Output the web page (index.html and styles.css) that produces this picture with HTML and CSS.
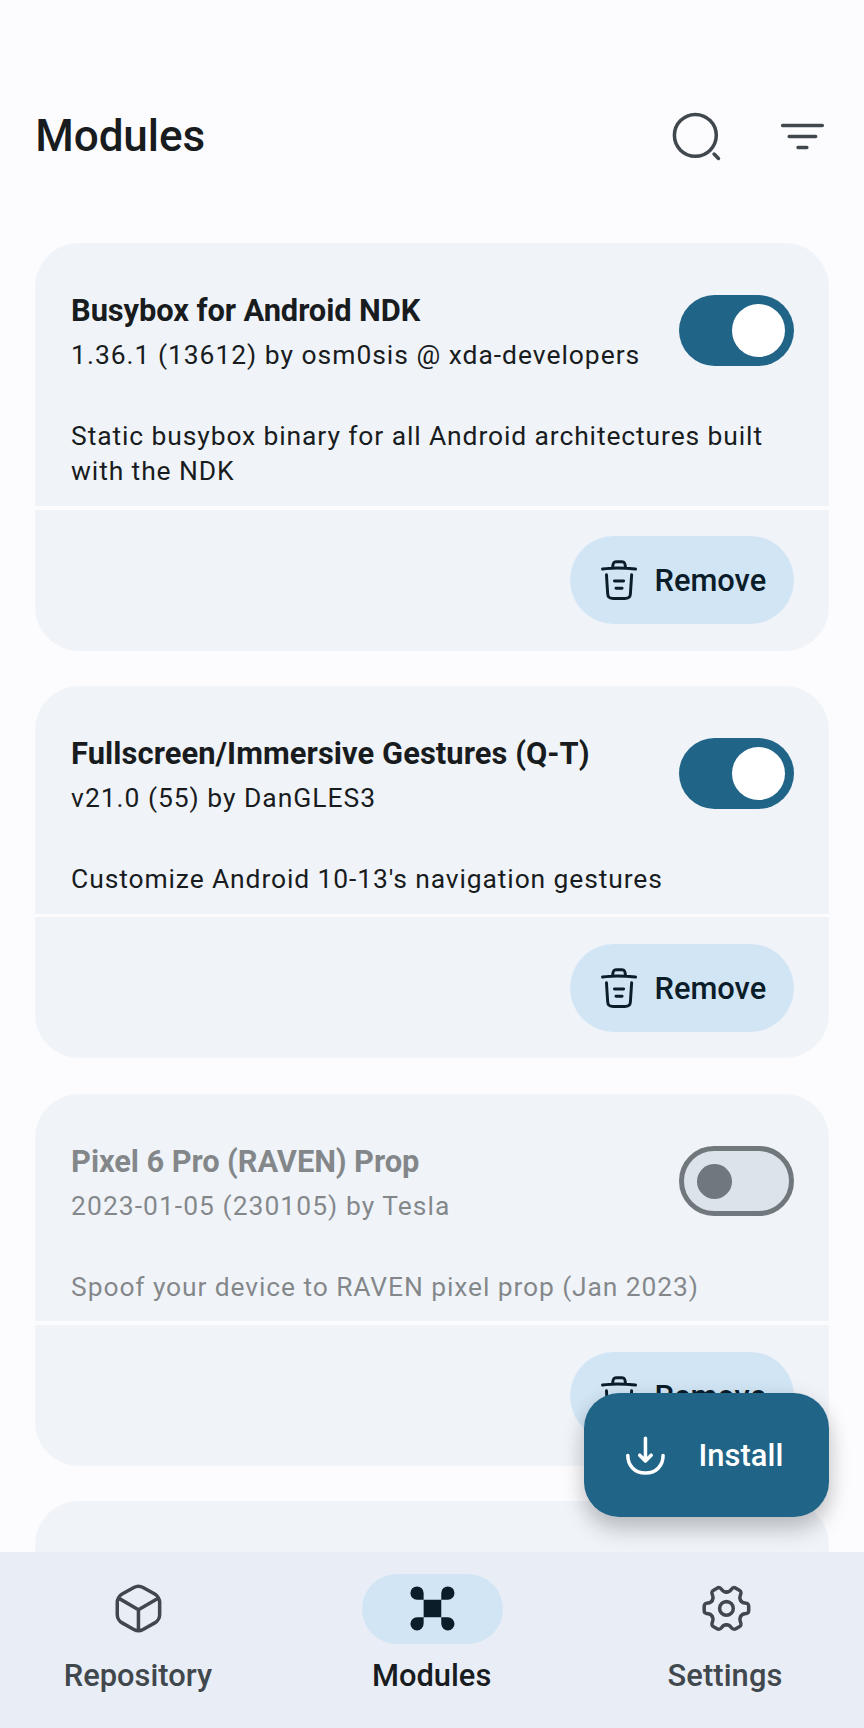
FILE: index.html
```html
<!DOCTYPE html>
<html lang="en">
<head>
<meta charset="utf-8">
<title>Modules</title>
<link rel="stylesheet" href="styles.css">
</head>
<body>
<svg class="sprite" aria-hidden="true">
  <symbol id="trash" viewBox="0 0 24 24"><path d="M21 5.98c-3.33-.33-6.68-.5-10.02-.5-1.98 0-3.96.1-5.94.3L3 5.98M8.5 4.97l.22-1.31C8.88 2.71 9 2 10.69 2h2.62c1.69 0 1.82.75 1.97 1.67l.22 1.3M18.85 9.14l-.65 10.07C18.09 20.78 18 22 15.21 22H8.79C6 22 5.91 20.78 5.8 19.21L5.15 9.14M10.33 16.5h3.33M9.5 12.5h5"/></symbol>
  <path id="tooth" d="M18.41 8.3C18.95 9.25 19.4 9.45 20.4 9.55C21.7 9.7 22.1 10 22.1 11.1V12.9C22.1 14 21.7 14.3 20.4 14.45C19.4 14.55 18.95 14.75 18.41 15.7"/>
</svg>
<div class="screen">
  <header class="topbar">
    <h1 class="topbar-title">Modules</h1>
    <svg class="icon" viewBox="0 0 24 24"><circle cx="11.5" cy="11.5" r="9.5"/><path d="M22 22l-2-2"/></svg>
    <svg class="icon" viewBox="0 0 24 24"><path d="M3 7h18M6 12h12M10 17h4"/></svg>
  </header>
  <main class="list">
    <section class="card">
      <div class="card-body">
        <div class="card-head">
          <div class="card-titles">
            <h2 class="name tight">Busybox for Android NDK</h2>
            <p class="meta">1.36.1 (13612) by osm0sis @ xda-developers</p>
          </div>
          <span class="switch on"><span class="thumb"></span></span>
        </div>
        <p class="desc">Static busybox binary for all Android architectures built with the NDK</p>
      </div>
      <div class="card-actions"><button class="remove"><svg class="icon small" viewBox="0 0 24 24"><use href="#trash"/></svg><span>Remove</span></button></div>
    </section>
    <section class="card">
      <div class="card-body">
        <div class="card-head">
          <div class="card-titles">
            <h2 class="name loose">Fullscreen/Immersive Gestures (Q-T)</h2>
            <p class="meta">v21.0 (55) by DanGLES3</p>
          </div>
          <span class="switch on"><span class="thumb"></span></span>
        </div>
        <p class="desc">Customize Android 10-13's navigation gestures</p>
      </div>
      <div class="card-actions"><button class="remove"><svg class="icon small" viewBox="0 0 24 24"><use href="#trash"/></svg><span>Remove</span></button></div>
    </section>
    <section class="card disabled">
      <div class="card-body">
        <div class="card-head">
          <div class="card-titles">
            <h2 class="name tight">Pixel 6 Pro (RAVEN) Prop</h2>
            <p class="meta">2023-01-05 (230105) by Tesla</p>
          </div>
          <span class="switch"><span class="thumb"></span></span>
        </div>
        <p class="desc">Spoof your device to RAVEN pixel prop (Jan 2023)</p>
      </div>
      <div class="card-actions"><button class="remove"><svg class="icon small" viewBox="0 0 24 24"><use href="#trash"/></svg><span>Remove</span></button></div>
    </section>
    <section class="card next"></section>
  </main>
  <button class="fab"><svg class="icon" viewBox="0 0 24 24"><path d="M4 12c0 4.42 3 8 8 8s8-3.58 8-8M12 4.2v10.2M9.4 11.9l2.6 2.6 2.6-2.6"/></svg><span>Install</span></button>
  <nav class="nav">
    <a class="nav-item">
      <span class="indicator"><svg class="icon" viewBox="0 0 24 24"><path d="M3.17 7.44L12 12.55l8.77-5.08M12 21.61v-9.07M9.93 2.48L4.59 5.45c-1.21.67-2.2 2.35-2.2 3.73v5.65c0 1.38.99 3.06 2.2 3.73l5.34 2.97c1.14.63 3.01.63 4.15 0l5.34-2.97c1.21-.67 2.2-2.35 2.2-3.73V9.18c0-1.38-.99-3.06-2.2-3.73l-5.34-2.97c-1.15-.64-3.01-.64-4.15 0z"/></svg></span>
      <span class="nav-label">Repository</span>
    </a>
    <a class="nav-item active">
      <span class="indicator"><svg class="icon solid" viewBox="0 0 24 24"><path d="M8 8h8v8H8zM5 2a3 3 0 0 0 0 6h3V5a3 3 0 0 0-3-3zM19 2a3 3 0 0 1 0 6h-3V5a3 3 0 0 1 3-3zM5 22a3 3 0 0 1 0-6h3v3a3 3 0 0 1-3 3zM19 22a3 3 0 0 0 0-6h-3v3a3 3 0 0 0 3 3z"/></svg></span>
      <span class="nav-label">Modules</span>
    </a>
    <a class="nav-item">
      <span class="indicator"><svg class="icon" viewBox="0 0 24 24"><circle cx="12" cy="12" r="3.1"/><use href="#tooth"/><use href="#tooth" transform="rotate(60 12 12)"/><use href="#tooth" transform="rotate(120 12 12)"/><use href="#tooth" transform="rotate(180 12 12)"/><use href="#tooth" transform="rotate(240 12 12)"/><use href="#tooth" transform="rotate(300 12 12)"/></svg></span>
      <span class="nav-label wide">Settings</span>
    </a>
  </nav>
</div>
</body>
</html>
```
FILE: styles.css
```css
* { box-sizing: border-box; margin: 0; padding: 0; }
body { background: #fcfcff; color: #191c1e; font-family: Roboto, "Liberation Sans", sans-serif; }
.sprite { display: none; }
.screen { position: relative; display: flex; flex-direction: column; width: 864px; height: 1728px; overflow: hidden; }
.icon { width: 52.9px; height: 52.9px; flex: none; fill: none; stroke: currentColor; stroke-width: 1.6; stroke-linecap: round; stroke-linejoin: round; }
.icon.small { width: 44.1px; height: 44.1px; }
.icon.solid { fill: currentColor; stroke: none; }

.topbar { flex: none; display: flex; align-items: center; gap: 52.9px; height: 207.2px; padding: 65.8px 35px 0 35.3px; margin-bottom: 35.6px; color: #41484d; }
.topbar-title { flex: 1; color: #191c1e; font-size: 44.1px; font-weight: 500; line-height: 62px; letter-spacing: -.12px; padding-bottom: 1px; }

.list { flex: 1; min-height: 0; overflow: hidden; display: flex; flex-direction: column; gap: 35.2px; padding: 0 35.3px; }
.card { flex: none; display: flex; flex-direction: column; gap: 3.7px; border-radius: 44.1px; overflow: hidden; }
.card-body { background: #f0f4f9; padding: 45.4px 34.8px 17.5px 35.8px; }
.card-head { display: flex; align-items: center; justify-content: space-between; }
.card-titles { display: flex; flex-direction: column; gap: 2.7px; }
.name { font-size: 30.86px; font-weight: 700; line-height: 46.5px; }
.name.tight { letter-spacing: -.1px; }
.name.loose { letter-spacing: .07px; }
.meta, .desc { font-size: 26.45px; line-height: 35.27px; letter-spacing: .89px; }
.meta { letter-spacing: .98px; }
.desc { margin-top: 45.3px; }
.disabled .name, .disabled .meta, .disabled .desc { opacity: .5; }
.disabled .meta { letter-spacing: 1.04px; }
.card-actions { background: #f0f4f9; display: flex; justify-content: flex-end; padding: 26.4px 34.8px 26.4px 35.3px; }
.next { height: 200px; background: #f0f4f9; }

.switch { flex: none; display: flex; align-items: center; width: 114.6px; height: 70.5px; border-radius: 36px; border: 5px solid #70787e; background: #dce3e9; padding: 0 12.6px; }
.thumb { width: 35.3px; height: 35.3px; border-radius: 50%; background: #70787e; }
.switch.on { justify-content: flex-end; border: 0; background: #206487; padding: 0 8.8px; }
.on .thumb { width: 52.9px; height: 52.9px; background: #fff; }

button { border: 0; font: 500 30.86px/44px Roboto, "Liberation Sans", sans-serif; display: flex; align-items: center; }
button span { padding-top: 2px; }
.remove { width: 223.5px; height: 88.2px; gap: 13.6px; padding: 0 26.4px; border-radius: 44.1px; background: #d2e5f5; color: #0b1d29; white-space: nowrap; }
.fab { position: absolute; right: 35.3px; bottom: 211.3px; width: 244.9px; height: 123.4px; padding-left: 35.3px; gap: 26.4px; border-radius: 35.3px; background: #206487; color: #fff; box-shadow: 0 13px 22px rgba(0,0,0,.2), 0 3px 22px rgba(0,0,0,.07); }
.fab span { letter-spacing: .1px; }

.nav { position: relative; flex: none; display: flex; gap: 17.6px; height: 176px; padding: 21.6px 0 0 .6px; background: #e9eef6; color: #41484d; font-size: 30.86px; font-weight: 500; line-height: 44px; }
.nav-item { flex: 1; display: flex; flex-direction: column; align-items: center; gap: 9px; }
.nav-label { padding: .5px 1.4px 0 0; }
.nav-label.wide { letter-spacing: .1px; padding-right: 2px; }
.indicator { display: flex; align-items: center; justify-content: center; width: 141px; height: 70.5px; border-radius: 36px; }
.active { color: #191c1e; }
.active .indicator { background: #d2e5f5; color: #0b1d29; }
```
